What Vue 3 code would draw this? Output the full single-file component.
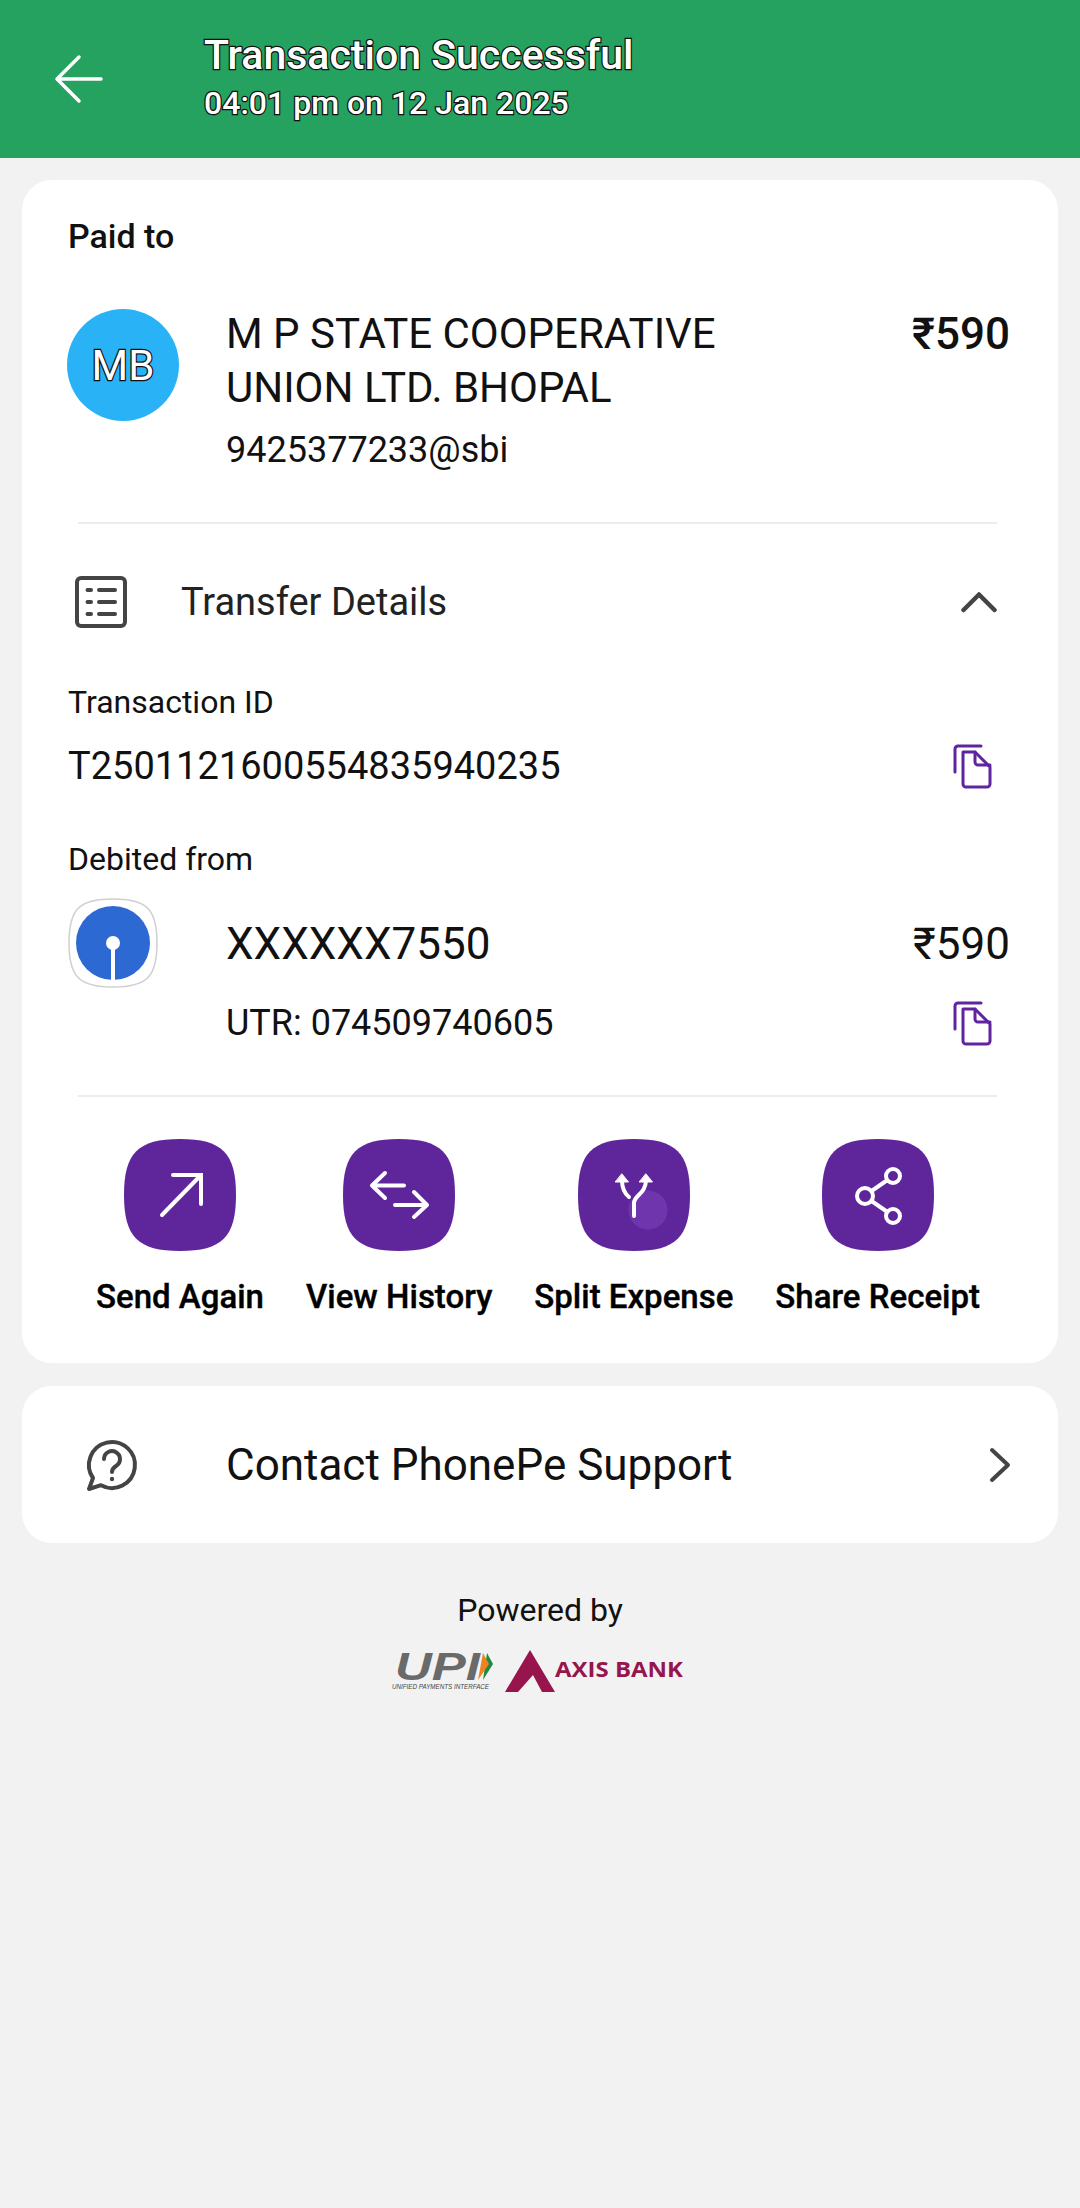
<script setup>
const squircle = 'M56 0C98 0 112 14 112 56S98 112 56 112S0 98 0 56S14 0 56 0Z'
</script>

<template>
  <div class="page">
    <header class="topbar">
      <svg class="back" width="60" height="60" viewBox="0 0 60 60" fill="none" stroke="#fff" stroke-width="3.5" stroke-linecap="round" stroke-linejoin="round">
        <path d="M52 30H8M30 8L8 30L30 52" />
      </svg>
      <div class="topbar-text">
        <div class="status">Transaction Successful</div>
        <div class="stamp">04:01 pm on 12 Jan 2025</div>
      </div>
    </header>

    <main class="content">
      <section class="card receipt">
        <div class="paid-to">Paid to</div>

        <div class="payee">
          <div class="avatar">MB</div>
          <div class="payee-text">
            <div class="payee-name">M P STATE COOPERATIVE UNION LTD. BHOPAL</div>
            <div class="payee-vpa">9425377233@sbi</div>
          </div>
          <div class="payee-amount">₹590</div>
        </div>

        <div class="rule rule-top"></div>

        <div class="details-head">
          <svg width="52" height="52" viewBox="0 0 52 52" fill="none" stroke="#444" stroke-width="4" stroke-linecap="round">
            <rect x="2" y="2" width="48" height="48" rx="4" />
            <path d="M12.5 14H16M24 14H40M12.5 26H16M24 26H40M12.5 38H16M24 38H40" />
          </svg>
          <span class="details-title">Transfer Details</span>
          <svg class="chevron-up" width="36" height="22" viewBox="0 0 36 22" fill="none" stroke="#444" stroke-width="4.5" stroke-linecap="round" stroke-linejoin="round">
            <path d="M2.5 19L18 3.5L33.5 19" />
          </svg>
        </div>

        <div class="field-label txn-label">Transaction ID</div>
        <div class="txn-row">
          <span class="txn-id">T2501121600554835940235</span>
          <svg class="copy" width="48" height="48" viewBox="0 0 48 48" fill="none" stroke="#5f259f" stroke-width="3" stroke-linecap="round" stroke-linejoin="round">
            <path d="M5 30V7a3 3 0 0 1 3-3H31" />
            <path d="M13 10H25L40 25V42a3 3 0 0 1-3 3H16a3 3 0 0 1-3-3Z" />
            <path d="M25 10V20a3 3 0 0 0 3 3H40" />
          </svg>
        </div>

        <div class="field-label debit-label">Debited from</div>
        <div class="bank">
          <svg class="bank-logo" width="90" height="90" viewBox="0 0 90 90">
            <path d="M45 1C79 1 89 11 89 45S79 89 45 89S1 79 1 45S11 1 45 1Z" fill="#fff" stroke="#cfcfcf" stroke-width="1.5" />
            <circle cx="45" cy="45" r="37" fill="#2d69d3" />
            <circle cx="45" cy="45" r="7" fill="#fff" />
            <rect x="43" y="47" width="4" height="36" fill="#fff" />
          </svg>
          <div class="bank-text">
            <div class="bank-line">
              <span class="account">XXXXXX7550</span>
              <span class="debit-amount">₹590</span>
            </div>
            <div class="utr-line">
              <span class="utr">UTR: 074509740605</span>
              <svg class="copy" width="48" height="48" viewBox="0 0 48 48" fill="none" stroke="#5f259f" stroke-width="3" stroke-linecap="round" stroke-linejoin="round">
                <path d="M5 30V7a3 3 0 0 1 3-3H31" />
                <path d="M13 10H25L40 25V42a3 3 0 0 1-3 3H16a3 3 0 0 1-3-3Z" />
                <path d="M25 10V20a3 3 0 0 0 3 3H40" />
              </svg>
            </div>
          </div>
        </div>

        <div class="rule rule-bottom"></div>

        <div class="actions">
          <div class="action">
            <svg width="112" height="112" viewBox="0 0 112 112" fill="none" stroke="#fff" stroke-width="4" stroke-linecap="round">
              <path :d="squircle" fill="#5f269b" stroke="none" />
              <path d="M38 76L77 36M49 36H77V65" />
            </svg>
            <span>Send Again</span>
          </div>
          <div class="action">
            <svg width="112" height="112" viewBox="0 0 112 112" fill="none" stroke="#fff" stroke-width="4" stroke-linecap="round" stroke-linejoin="round">
              <path :d="squircle" fill="#5f269b" stroke="none" />
              <path d="M61 46.5H29M42 34L29 46.5L42 59M52 66H84M71 53L84 66L71 78" />
            </svg>
            <span>View History</span>
          </div>
          <div class="action">
            <svg width="112" height="112" viewBox="0 0 112 112" fill="none" stroke="#fff" stroke-width="4" stroke-linecap="round">
              <path :d="squircle" fill="#5f269b" stroke="none" />
              <circle cx="70" cy="71" r="19.5" fill="#6e35ad" stroke="none" />
              <path d="M56 77V64C56 56 68 55 68 41M51 58C46 54 44 48 44 41" />
              <path d="M68 35L74.5 43H61.5ZM44 35L50.5 43H37.5Z" fill="#fff" stroke="#fff" stroke-width="1" stroke-linejoin="round" />
            </svg>
            <span>Split Expense</span>
          </div>
          <div class="action">
            <svg width="112" height="112" viewBox="0 0 112 112" fill="none" stroke="#fff" stroke-width="4">
              <path :d="squircle" fill="#5f269b" stroke="none" />
              <circle cx="71" cy="37" r="7" />
              <circle cx="43" cy="57" r="8" />
              <circle cx="71" cy="77" r="7" />
              <path d="M49.5 52L65.5 41M49.5 62L65.5 73" />
            </svg>
            <span>Share Receipt</span>
          </div>
        </div>
      </section>

      <section class="card support">
        <svg width="60" height="60" viewBox="0 0 60 60" fill="none" stroke="#444" stroke-width="4" stroke-linecap="round" stroke-linejoin="round">
          <path d="M11 43A23 23 0 1 1 19 50.2L7 54Z" />
          <path d="M22 24a8 8 0 1 1 12 7c-3 2-4 3-4 6" />
          <circle cx="30" cy="44" r="2.2" fill="#444" stroke="none" />
        </svg>
        <span class="support-text">Contact PhonePe Support</span>
        <svg class="chevron-right" width="22" height="36" viewBox="0 0 22 36" fill="none" stroke="#444" stroke-width="4" stroke-linecap="round" stroke-linejoin="round">
          <path d="M3 3L19 18L3 33" />
        </svg>
      </section>

      <footer class="powered">
        <div class="powered-label">Powered by</div>
        <svg class="partners" width="310" height="48" viewBox="0 0 310 48">
          <text x="10" y="32" class="upi-mark" textLength="85" lengthAdjust="spacingAndGlyphs">UPI</text>
          <text x="7" y="41" class="upi-sub" textLength="97" lengthAdjust="spacingAndGlyphs">UNIFIED PAYMENTS INTERFACE</text>
          <polygon points="102,5 108,16 98,32" fill="#1a8a45" />
          <polygon points="98,5 104,16 93,32" fill="#ef8222" />
          <polygon points="120,44 145,2 170,44 157,44 148,27 133,44" fill="#97144d" />
          <text x="170" y="29" class="axis-mark" textLength="128" lengthAdjust="spacingAndGlyphs">AXIS BANK</text>
        </svg>
      </footer>
    </main>
  </div>
</template>

<style scoped>
.page {
  width: 1080px;
  height: 2208px;
  background: #f2f2f2;
  font-family: Roboto, "Liberation Sans", sans-serif;
  color: #111;
  overflow: hidden;
}

.topbar {
  height: 158px;
  background: #25a25f;
  display: flex;
  align-items: center;
}

.back {
  margin-left: 49px;
  margin-right: 95px;
}

.topbar-text {
  margin-top: -6px;
  color: #fff;
  font-weight: 500;
  -webkit-text-stroke: 2.5px #111;
  paint-order: stroke fill;
}

.status {
  font-size: 41px;
  line-height: 50px;
}

.stamp {
  font-size: 32px;
  line-height: 40px;
  margin-top: 3px;
}

.content {
  padding: 22px 22px 0;
  display: flex;
  flex-direction: column;
  gap: 23px;
}

.card {
  background: #fff;
  border-radius: 30px;
}

.receipt {
  height: 1183px;
  padding-top: 36px;
  box-sizing: border-box;
}

.paid-to {
  margin-left: 46px;
  font-size: 34px;
  line-height: 40px;
  font-weight: 500;
}

.payee {
  margin-top: 53px;
  display: flex;
  align-items: flex-start;
  padding: 0 48px 0 45px;
}

.avatar {
  flex: none;
  width: 112px;
  height: 112px;
  border-radius: 50%;
  background: #29b3f6;
  color: #fff;
  font-size: 42px;
  display: flex;
  align-items: center;
  justify-content: center;
  -webkit-text-stroke: 2.5px #111;
  paint-order: stroke fill;
}

.payee-text {
  margin-left: 47px;
  flex: 1;
  margin-top: -2px;
}

.payee-name {
  font-size: 42px;
  line-height: 54px;
  width: 540px;
}

.payee-vpa {
  font-size: 36px;
  line-height: 44px;
  margin-top: 13px;
}

.payee-amount {
  font-size: 44px;
  line-height: 54px;
  font-weight: 500;
  margin-top: -2px;
}

.rule {
  height: 2px;
  background: #ececec;
  margin-left: 56px;
  margin-right: 61px;
}

.rule-top {
  margin-top: 50px;
}

.details-head {
  margin-top: 48px;
  height: 60px;
  display: flex;
  align-items: center;
  padding-left: 53px;
  padding-right: 61px;
}

.details-title {
  margin-left: 54px;
  font-size: 38px;
  color: #222;
  flex: 1;
}

.field-label {
  margin-left: 46px;
  font-size: 32px;
  line-height: 40px;
}

.txn-label {
  margin-top: 50px;
}

.txn-row {
  margin-top: 20px;
  height: 48px;
  display: flex;
  align-items: center;
  justify-content: space-between;
  padding: 0 60px 0 46px;
}

.txn-id {
  font-size: 38px;
}

.debit-label {
  margin-top: 49px;
}

.bank {
  margin-top: 19px;
  display: flex;
  align-items: flex-start;
  padding-left: 46px;
}

.bank-logo {
  flex: none;
}

.bank-text {
  flex: 1;
  margin-left: 68px;
}

.bank-line {
  display: flex;
  align-items: center;
  justify-content: space-between;
  height: 54px;
  margin-top: 19px;
  padding-right: 48px;
  font-size: 44px;
}

.utr-line {
  display: flex;
  align-items: center;
  justify-content: space-between;
  height: 48px;
  margin-top: 28px;
  padding-right: 60px;
}

.utr {
  font-size: 36px;
}

.rule-bottom {
  margin-top: 48px;
}

.actions {
  margin-top: 42px;
  display: flex;
  justify-content: center;
  gap: 42px;
  padding-right: 4px;
}

.action {
  display: flex;
  flex-direction: column;
  align-items: center;
  font-size: 33px;
  font-weight: 500;
  -webkit-text-stroke: 0.4px #000;
  color: #000;
}

.action span {
  margin-top: 26px;
  line-height: 40px;
  white-space: nowrap;
}

.support {
  height: 157px;
  display: flex;
  align-items: center;
  padding: 0 47px 0 60px;
}

.support-text {
  margin-left: 84px;
  flex: 1;
  font-size: 44px;
}

.powered {
  display: flex;
  flex-direction: column;
  align-items: center;
  margin-top: 24px;
}

.powered-label {
  font-size: 32px;
  line-height: 40px;
}

.partners {
  margin-top: 18px;
}

.upi-mark {
  font-family: "Liberation Sans", sans-serif;
  font-size: 38px;
  font-weight: 700;
  font-style: italic;
  fill: #6a6a6a;
}

.upi-sub {
  font-family: "Liberation Sans", sans-serif;
  font-size: 7.5px;
  font-style: italic;
  fill: #444;
}

.axis-mark {
  font-family: "Open Sans", sans-serif;
  font-size: 22px;
  font-weight: 700;
  fill: #97144d;
}
</style>
